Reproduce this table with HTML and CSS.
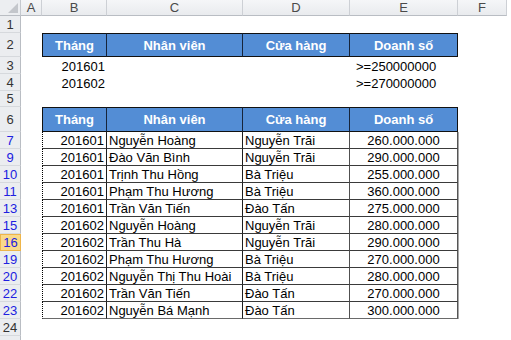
FILE: index.html
```html
<!DOCTYPE html>
<html lang="vi">
<head>
<meta charset="utf-8">
<title>Sheet</title>
<link rel="stylesheet" href="styles.css">
</head>
<body>
<div class="sheet">
  <div class="row h16">
    <div class="corner"><span class="tri"></span></div>
    <div class="ch">A</div><div class="ch">B</div><div class="ch">C</div><div class="ch">D</div><div class="ch">E</div><div class="ch">F</div><div class="blank"></div>
  </div>
  <div class="row h17">
    <div class="rh">1</div><div></div><div></div><div></div><div></div><div></div><div></div><div></div>
  </div>
  <div class="row h24">
    <div class="rh">2</div><div></div>
    <div class="t hd first">Tháng</div><div class="t hd">Nhân viên</div><div class="t hd">Cửa hàng</div><div class="t hd last">Doanh số</div>
    <div></div><div></div>
  </div>
  <div class="row h17">
    <div class="rh">3</div><div></div>
    <div class="c num">201601</div><div class="c"></div><div class="c"></div><div class="c crit">&gt;=250000000</div>
    <div></div><div></div>
  </div>
  <div class="row h17">
    <div class="rh">4</div><div></div>
    <div class="c num">201602</div><div class="c"></div><div class="c"></div><div class="c crit">&gt;=270000000</div>
    <div></div><div></div>
  </div>
  <div class="row h16">
    <div class="rh">5</div><div></div><div></div><div></div><div></div><div></div><div></div><div></div>
  </div>
  <div class="row h25">
    <div class="rh">6</div><div></div>
    <div class="t hd first">Tháng</div><div class="t hd">Nhân viên</div><div class="t hd">Cửa hàng</div><div class="t hd last">Doanh số</div>
    <div></div><div></div>
  </div>

  <div class="row h17">
    <div class="rh f">7</div><div></div>
    <div class="t num first">201601</div><div class="t txt">Nguyễn Hoàng</div><div class="t txt soft">Nguyễn Trãi</div><div class="t ctr last">260.000.000</div>
    <div></div><div></div>
  </div>
  <div class="row h17">
    <div class="rh f">9</div><div></div>
    <div class="t num first">201601</div><div class="t txt">Đào Văn Bình</div><div class="t txt soft">Nguyễn Trãi</div><div class="t ctr last">290.000.000</div>
    <div></div><div></div>
  </div>
  <div class="row h17">
    <div class="rh f">10</div><div></div>
    <div class="t num first">201601</div><div class="t txt">Trịnh Thu Hồng</div><div class="t txt soft">Bà Triệu</div><div class="t ctr last">255.000.000</div>
    <div></div><div></div>
  </div>
  <div class="row h17">
    <div class="rh f">11</div><div></div>
    <div class="t num first">201601</div><div class="t txt">Phạm Thu Hương</div><div class="t txt soft">Bà Triệu</div><div class="t ctr last">360.000.000</div>
    <div></div><div></div>
  </div>
  <div class="row h17">
    <div class="rh f">13</div><div></div>
    <div class="t num first">201601</div><div class="t txt">Trần Văn Tiến</div><div class="t txt soft">Đào Tấn</div><div class="t ctr last">275.000.000</div>
    <div></div><div></div>
  </div>
  <div class="row h17">
    <div class="rh f">15</div><div></div>
    <div class="t num first">201602</div><div class="t txt">Nguyễn Hoàng</div><div class="t txt soft">Nguyễn Trãi</div><div class="t ctr last">280.000.000</div>
    <div></div><div></div>
  </div>
  <div class="row h17">
    <div class="rh f sel">16</div><div></div>
    <div class="t num first">201602</div><div class="t txt">Trần Thu Hà</div><div class="t txt soft">Nguyễn Trãi</div><div class="t ctr last">290.000.000</div>
    <div></div><div></div>
  </div>
  <div class="row h17">
    <div class="rh f">19</div><div></div>
    <div class="t num first">201602</div><div class="t txt">Phạm Thu Hương</div><div class="t txt soft">Bà Triệu</div><div class="t ctr last">270.000.000</div>
    <div></div><div></div>
  </div>
  <div class="row h17">
    <div class="rh f">20</div><div></div>
    <div class="t num first">201602</div><div class="t txt">Nguyễn Thị Thu Hoài</div><div class="t txt soft">Bà Triệu</div><div class="t ctr last">280.000.000</div>
    <div></div><div></div>
  </div>
  <div class="row h17">
    <div class="rh f">22</div><div></div>
    <div class="t num first">201602</div><div class="t txt">Trần Văn Tiến</div><div class="t txt soft">Đào Tấn</div><div class="t ctr last">270.000.000</div>
    <div></div><div></div>
  </div>
  <div class="row h17">
    <div class="rh f">23</div><div></div>
    <div class="t num first bottom">201602</div><div class="t txt bottom">Nguyễn Bá Mạnh</div><div class="t txt soft bottom">Đào Tấn</div><div class="t ctr last bottom">300.000.000</div>
    <div></div><div></div>
  </div>
  <div class="row h17">
    <div class="rh">24</div><div></div><div></div><div></div><div></div><div></div><div></div><div></div>
  </div>
  <div class="row h17">
    <div class="rh"></div><div></div><div></div><div></div><div></div><div></div><div></div><div></div>
  </div>
</div>
</body>
</html>
```

FILE: styles.css
```css
html, body {
  margin: 0;
  padding: 0;
  background: #fff;
}
body {
  width: 511px;
  height: 340px;
  overflow: hidden;
  font-family: "Liberation Sans", Arial, sans-serif;
  font-size: 13px;
  color: #000;
}
.sheet {
  display: flex;
  flex-direction: column;
}
.row {
  display: grid;
  grid-template-columns: 21px 21px 65px 136px 107px 108px 49px 1fr;
}
.h16 { height: 16px; }
.h17 { height: 17px; }
.h24 { height: 24px; }
.h25 { height: 25px; }

.row > div {
  box-sizing: border-box;
  min-width: 0;
}

/* column headers */
.corner {
  position: relative;
  background: #eceef1;
  border-right: 1px solid #c5c9cf;
  border-bottom: 1px solid #b9bdc3;
}
.corner .tri {
  position: absolute;
  right: 2px;
  bottom: 2px;
  width: 0;
  height: 0;
  border-left: 10px solid transparent;
  border-bottom: 10px solid #c3c6cb;
}
.ch {
  background: linear-gradient(#f5f6f8, #e9ebee);
  border-right: 1px solid #cdd0d5;
  border-bottom: 1px solid #b9bdc3;
  color: #4a4a4a;
  display: flex;
  align-items: center;
  justify-content: center;
  line-height: 15px;
}
.blank { background: #fff; }

/* row headers */
.rh {
  background: #ebedf0;
  border-right: 1px solid #b9bdc3;
  border-bottom: 1px solid #d6d9dd;
  color: #333;
  display: flex;
  align-items: center;
  justify-content: center;
  line-height: 15px;
}
.rh.f { color: #2020e0; }
.rh.sel {
  background: #f9d98a;
  border: 1px solid #eeb54a;
  border-top-color: #eeb54a;
}

/* plain cells */
.c {
  display: flex;
  align-items: flex-end;
  line-height: 15px;
  padding: 0 2px 0 2px;
  white-space: nowrap;
}
.c.num { justify-content: flex-end; }
.c.crit { padding-left: 6px; }

/* table cells */
.t {
  display: flex;
  align-items: flex-end;
  line-height: 15px;
  padding: 0 2px;
  white-space: nowrap;
  overflow: hidden;
  border-right: 1px solid #1e1e1e;
  border-bottom: 1px solid #3a3a3a;
}
.t.first { border-left: 1px dotted #000; }
.t.soft { border-right-color: #505050; }
.t.last {
  border-right: 1px solid #555;
  box-shadow: 1px 0 0 #a8a8a8;
}
.t.bottom { border-bottom-color: #6a6a6a; }
.t.num { justify-content: flex-end; }
.t.txt { justify-content: flex-start; }
.t.ctr { justify-content: center; }

.t.hd {
  background: #538dd5;
  color: #fff;
  font-weight: bold;
  justify-content: center;
  align-items: center;
  border-top: 1px solid #111;
  border-bottom: 1px solid #111;
  border-right: 1px solid #16243a;
}
.t.hd.first { border-left: 1px solid #111; }
.t.hd.last { border-right: 1px solid #111; box-shadow: none; }
```
